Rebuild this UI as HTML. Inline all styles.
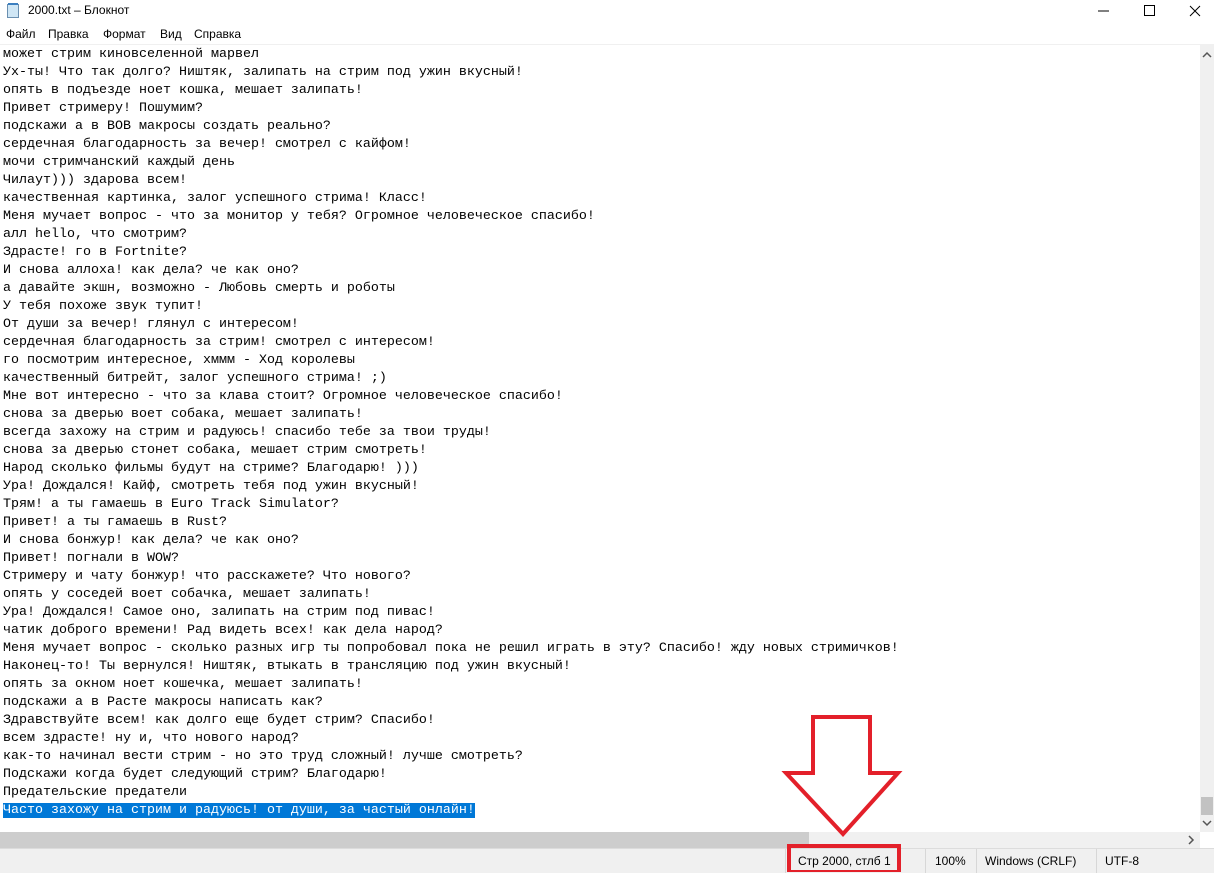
<!DOCTYPE html>
<html><head><meta charset="utf-8"><style>
body{margin:0;width:1214px;height:872px;overflow:hidden;background:#fff;font-family:"Segoe UI","Liberation Sans",sans-serif;position:relative}
.title{position:absolute;left:0;top:0;width:1214px;height:22px;font-size:12px}
.menu{position:absolute;left:0;top:22px;width:1214px;height:22px;font-size:12px;border-bottom:1px solid #f0f0f0}
.menu span{position:absolute;top:5px}
.text{position:absolute;left:3px;top:46px;font-family:"Liberation Mono",monospace;font-size:13.33px;line-height:18px;white-space:pre;color:#000}
.sel{background:#0078d7;color:#fff}
.vs{position:absolute;left:1200px;top:45px;width:14px;height:787px;background:#f0f0f0}
.hs{position:absolute;left:0;top:832px;width:1200px;height:16px;background:#f0f0f0}
.status{position:absolute;left:0;top:848px;width:1214px;height:24px;background:#f0f0f0;border-top:1px solid #dcdcdc;font-size:12px}
.status span{position:absolute;top:5px}
.sep{position:absolute;top:0;width:1px;height:24px;background:#d7d7d7}
</style></head><body>
<div class="title">
<svg style="position:absolute;left:7px;top:3px" width="12" height="15"><rect x="0.5" y="1.5" width="11" height="13" fill="#cfe6f5" stroke="#6a8fb0"/><rect x="1" y="0" width="10" height="2" fill="#3c7fc0"/></svg>
<span style="position:absolute;left:28px;top:3px">2000.txt – Блокнот</span>
<svg style="position:absolute;left:1090px;top:4px" width="120" height="14"><line x1="8" y1="7" x2="19" y2="7" stroke="#000"/><rect x="54.5" y="1.5" width="10" height="10" fill="none" stroke="#000"/><path d="M135 2l10 10M145 2l-10 10" stroke="#000" transform="translate(-35,0)"/></svg>
</div>
<div class="menu"><span style="left:6px">Файл</span><span style="left:48px">Правка</span><span style="left:103px">Формат</span><span style="left:160px">Вид</span><span style="left:194px">Справка</span></div>
<div class="text">может стрим киновселенной марвел
Ух-ты! Что так долго? Ништяк, залипать на стрим под ужин вкусный!
опять в подъезде ноет кошка, мешает залипать!
Привет стримеру! Пошумим?
подскажи а в ВОВ макросы создать реально?
сердечная благодарность за вечер! смотрел с кайфом!
мочи стримчанский каждый день
Чилаут))) здарова всем!
качественная картинка, залог успешного стрима! Класс!
Меня мучает вопрос - что за монитор у тебя? Огромное человеческое спасибо!
алл hello, что смотрим?
Здрасте! го в Fortnite?
И снова аллоха! как дела? че как оно?
а давайте экшн, возможно - Любовь смерть и роботы
У тебя похоже звук тупит!
От души за вечер! глянул с интересом!
сердечная благодарность за стрим! смотрел с интересом!
го посмотрим интересное, хммм - Ход королевы
качественный битрейт, залог успешного стрима! ;)
Мне вот интересно - что за клава стоит? Огромное человеческое спасибо!
снова за дверью воет собака, мешает залипать!
всегда захожу на стрим и радуюсь! спасибо тебе за твои труды!
снова за дверью стонет собака, мешает стрим смотреть!
Народ сколько фильмы будут на стриме? Благодарю! )))
Ура! Дождался! Кайф, смотреть тебя под ужин вкусный!
Трям! а ты гамаешь в Euro Track Simulator?
Привет! а ты гамаешь в Rust?
И снова бонжур! как дела? че как оно?
Привет! погнали в WOW?
Стримеру и чату бонжур! что расскажете? Что нового?
опять у соседей воет собачка, мешает залипать!
Ура! Дождался! Самое оно, залипать на стрим под пивас!
чатик доброго времени! Рад видеть всех! как дела народ?
Меня мучает вопрос - сколько разных игр ты попробовал пока не решил играть в эту? Спасибо! жду новых стримичков!
Наконец-то! Ты вернулся! Ништяк, втыкать в трансляцию под ужин вкусный!
опять за окном ноет кошечка, мешает залипать!
подскажи а в Расте макросы написать как?
Здравствуйте всем! как долго еще будет стрим? Спасибо!
всем здрасте! ну и, что нового народ?
как-то начинал вести стрим - но это труд сложный! лучше смотреть?
Подскажи когда будет следующий стрим? Благодарю!
Предательские предатели
<span class="sel">Часто захожу на стрим и радуюсь! от души, за частый онлайн!</span></div>
<div class="vs"><svg width="14" height="787"><path d="M3 137l4-4 4 4" transform="translate(0,-125)" fill="none" stroke="#555" stroke-width="1.5"/><rect x="1" y="752" width="12" height="18" fill="#c2c2c2"/><path d="M3 776l4 4 4-4" fill="none" stroke="#555" stroke-width="1.5"/></svg></div>
<div class="hs"><div style="position:absolute;left:0;top:0;width:809px;height:16px;background:#cdcdcd"></div><svg style="position:absolute;left:1186px;top:3px" width="10" height="10"><path d="M3 1l4 4-4 4" fill="none" stroke="#555" stroke-width="1.5"/></svg></div>
<div class="status">
<div class="sep" style="left:785px"></div><div class="sep" style="left:925px"></div><div class="sep" style="left:976px"></div><div class="sep" style="left:1096px"></div>
<span style="left:798px">Стр 2000, стлб 1</span><span style="left:935px">100%</span><span style="left:985px">Windows (CRLF)</span><span style="left:1105px">UTF-8</span>
</div>
<svg style="position:absolute;left:0;top:0" width="1214" height="872"><path d="M813 717H870V773H898L843 834L786 773H813Z" fill="#fff" stroke="#e3202a" stroke-width="4" stroke-linejoin="miter"/><rect x="789" y="846" width="110" height="26" fill="none" stroke="#e3202a" stroke-width="4"/></svg>
</body></html>
